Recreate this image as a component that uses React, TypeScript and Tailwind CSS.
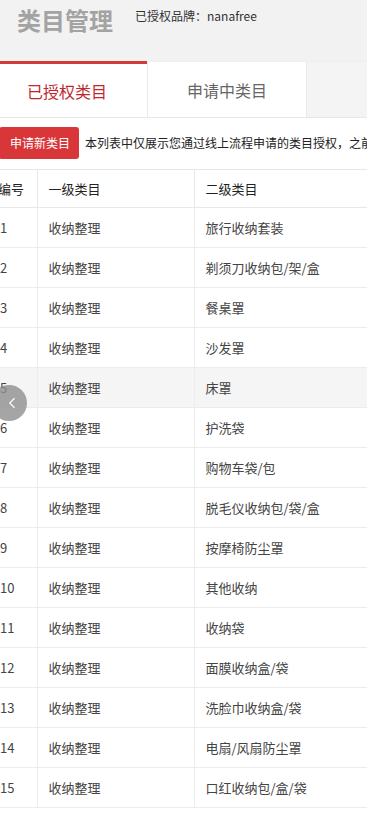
import { ChevronLeft } from 'lucide-react';

const rows = [
  '旅行收纳套装',
  '剃须刀收纳包/架/盒',
  '餐桌罩',
  '沙发罩',
  '床罩',
  '护洗袋',
  '购物车袋/包',
  '脱毛仪收纳包/袋/盒',
  '按摩椅防尘罩',
  '其他收纳',
  '收纳袋',
  '面膜收纳盒/袋',
  '洗脸巾收纳盒/袋',
  '电扇/风扇防尘罩',
  '口红收纳包/盒/袋',
];

export default function App() {
  return (
    <div
      className="relative w-[367px] h-[813px] overflow-hidden bg-white text-[#333]"
      style={{ fontFamily: '"Noto Sans CJK SC", "Liberation Sans", sans-serif' }}
    >
      {/* page header */}
      <div className="h-[61px] bg-[#f2f2f2] flex items-start pl-[17px] pt-[4px]">
        <h1 className="text-[24px] font-bold text-[#a3a3a3] leading-[32px]">类目管理</h1>
        <span className="ml-[22px] mt-[3px] text-[12px] leading-[18px] text-[#333]">
          已授权品牌：nanafree
        </span>
      </div>

      {/* tabs */}
      <div className="flex h-[57px] ml-[-13px] border-t border-[#eee] border-b border-b-[#e8e8e8] bg-[#f4f4f4]">
        <div className="w-[160px] bg-white border-t-[3px] border-[#d33a3a] flex items-center justify-center text-[16px] text-[#c0282d] -mt-px">
          已授权类目
        </div>
        <div className="w-[160px] bg-white border-l border-r border-[#eaeaea] flex items-center justify-center text-[16px] text-[#666]">
          申请中类目
        </div>
      </div>

      {/* action bar */}
      <div className="flex items-center h-[52px] -mt-px">
        <button className="shrink-0 h-[32px] w-[80px] -ml-px bg-[#d9363a] rounded-[3px] text-white text-[12px] pl-[2px]">
          申请新类目
        </button>
        <span className="ml-[6px] text-[12px] whitespace-nowrap text-[#222]">
          本列表中仅展示您通过线上流程申请的类目授权，之前
        </span>
      </div>

      {/* table */}
      <table className="ml-[-13px] w-[380px] border-collapse text-[13px] table-fixed">
        <colgroup>
          <col className="w-[50px]" />
          <col className="w-[157px]" />
          <col />
        </colgroup>
        <thead>
          <tr className="h-[38px] border-t border-b border-[#e8e8e8]">
            <th className="text-left font-normal pl-[11px] border-r border-[#e8e8e8] text-[#222]">编号</th>
            <th className="text-left font-normal pl-[11px] border-r border-[#e8e8e8] text-[#222]">一级类目</th>
            <th className="text-left font-normal pl-[11px] text-[#222]">二级类目</th>
          </tr>
        </thead>
        <tbody>
          {rows.map((name, i) => (
            <tr
              key={i}
              className={`h-[40px] border-b border-[#ececec] ${i === 4 ? 'bg-[#f5f5f5]' : 'bg-white'}`}
            >
              <td className="pl-[13px] border-r border-[#ececec] text-[#444]">{i + 1}</td>
              <td className="pl-[11px] border-r border-[#ececec] text-[#444]">收纳整理</td>
              <td className="pl-[11px] text-[#444]">{name}</td>
            </tr>
          ))}
        </tbody>
      </table>

      {/* floating back button */}
      <div className="absolute left-[-9px] top-[385px] w-[36px] h-[36px] rounded-full bg-[#8f8f8f]/80 flex items-center justify-end pr-[6px]">
        <ChevronLeft className="w-[18px] h-[18px] text-white" strokeWidth={1.5} />
      </div>
    </div>
  );
}
